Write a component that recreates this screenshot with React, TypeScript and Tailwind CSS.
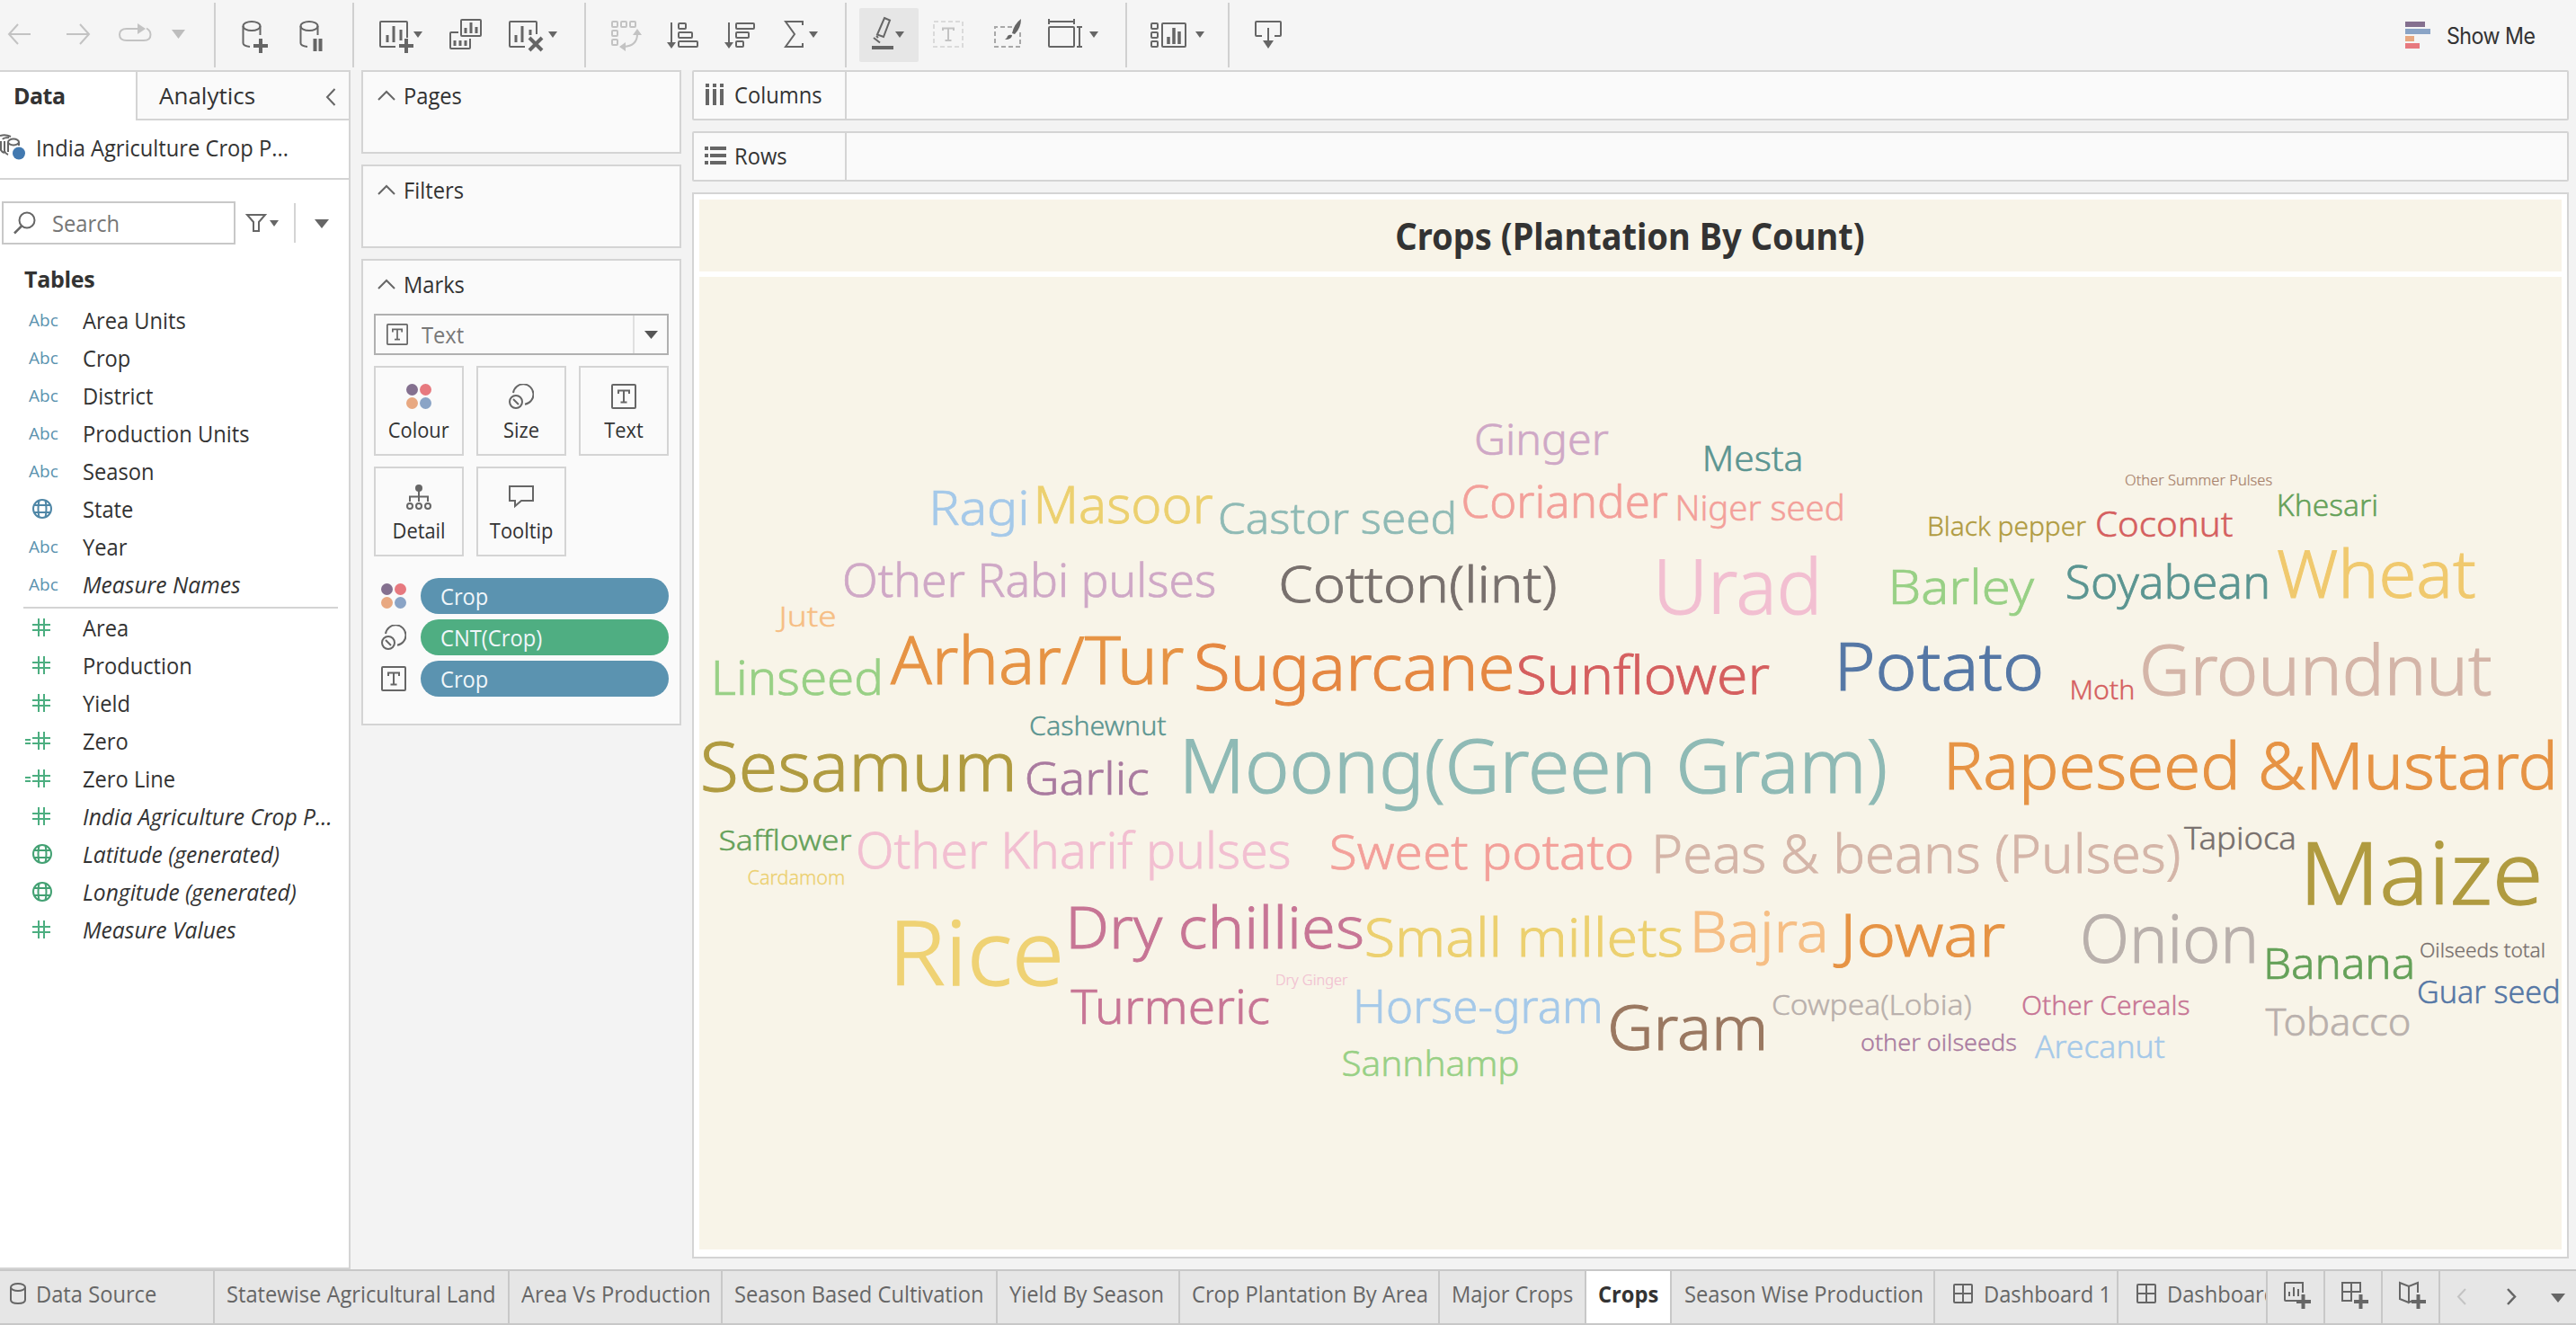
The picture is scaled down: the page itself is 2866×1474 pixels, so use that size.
import React from "react";

/* ---------- word cloud ---------- */

type Word = [text: string, left: number, right: number, baseline: number, cap: number, color: string];

const WORDS: Word[] = [
  ["Ginger", 1642, 1790, 506, 34, "#cfa8c6"],
  ["Mesta", 1897, 2004, 523.7, 27, "#5b9591"],
  ["Other Summer Pulses", 2365, 2527.5, 539.7, 11.5, "#a8826c"],
  ["Khesari", 2536, 2644.5, 574, 23, "#65a159"],
  ["Ragi", 1038.5, 1142, 584, 38, "#a5c9e9"],
  ["Masoor", 1154.6, 1349, 582.3, 41, "#ecd06f"],
  ["Castor seed", 1357, 1617.6, 594, 34, "#8fbab5"],
  ["Coriander", 1628.5, 1856, 576, 36, "#f3a09a"],
  ["Niger seed", 1866.5, 2050, 578.7, 27, "#f3a09a"],
  ["Black pepper", 2146, 2321.5, 595.7, 21, "#b09b40"],
  ["Coconut", 2333, 2484, 596.7, 28, "#d55f5f"],
  ["Other Rabi pulses", 940, 1351, 664, 37, "#cfa8c6"],
  ["Cotton(lint)", 1425.6, 1731, 670, 40, "#78706d"],
  ["Urad", 1846, 2021, 683, 60, "#f2bfd1"],
  ["Barley", 2106, 2264, 671.7, 38, "#98d085"],
  ["Soyabean", 2299.6, 2522.5, 666, 36.5, "#5b9591"],
  ["Wheat", 2534, 2753, 665, 52, "#f0c96e"],
  ["Jute", 863, 929, 697, 22.5, "#f6be84"],
  ["Linseed", 796, 979, 772.7, 38, "#98d085"],
  ["Arhar/Tur", 991, 1316.6, 761, 52, "#e69344"],
  ["Sugarcane", 1331, 1682, 768, 51, "#e58741"],
  ["Sunflower", 1690, 1969, 772, 41.5, "#d55f5f"],
  ["Potato", 2048, 2270, 768, 52, "#5577a5"],
  ["Moth", 2304.5, 2373.7, 778, 21, "#d55f5f"],
  ["Groundnut", 2384, 2771.5, 773, 55, "#d4b5a8"],
  ["Cashewnut", 1146, 1298, 817.7, 20.5, "#5b9591"],
  ["Sesamum", 783, 1126, 880, 54, "#b09b40"],
  ["Garlic", 1143, 1278, 883.7, 35.5, "#a97a9f"],
  ["Moong(Green Gram)", 1320, 2097, 881.7, 59, "#8fbab5"],
  ["Rapeseed &Mustard", 2169, 2840.6, 878, 51.7, "#e69344"],
  ["Safflower", 800.6, 947, 945.7, 22.5, "#65a159"],
  ["Other Kharif pulses", 955, 1435, 966, 39, "#f2bfd1"],
  ["Sweet potato", 1481, 1815.7, 967, 38, "#f3a09a"],
  ["Peas & beans (Pulses)", 1842, 2424, 970.7, 42, "#d4b5a8"],
  ["Tapioca", 2430, 2552, 945, 25, "#78706d"],
  ["Cardamom", 832.5, 939.6, 984, 15, "#ecd06f"],
  ["Maize", 2567.7, 2823.7, 1006, 69, "#b09b40"],
  ["Rice", 998, 1179, 1096, 71, "#efd274"],
  ["Dry chillies", 1191.6, 1515.6, 1055, 46, "#c77595"],
  ["Small millets", 1521, 1870.7, 1063.7, 41.5, "#ecd06f"],
  ["Bajra", 1886, 2030, 1059, 44.5, "#f6be84"],
  ["Jowar", 2040, 2231, 1063.7, 47.5, "#e69344"],
  ["Onion", 2318, 2507.7, 1071, 52, "#b9b0ac"],
  ["Banana", 2522, 2684, 1089, 34.7, "#65a159"],
  ["Oilseeds total", 2693, 2831, 1065, 15, "#78706d"],
  ["Dry Ginger", 1420, 1500, 1095.7, 11.5, "#f2bfd1"],
  ["Guar seed", 2691, 2846, 1116, 24.5, "#5577a5"],
  ["Turmeric", 1191.6, 1411.6, 1138.7, 38, "#c77595"],
  ["Horse-gram", 1510, 1780.5, 1137.7, 37, "#a5c9e9"],
  ["Gram", 1792.4, 1961.7, 1167.7, 49, "#9a7861"],
  ["Cowpea(Lobia)", 1972, 2193, 1128.7, 22.5, "#b9b0ac"],
  ["Other Cereals", 2250, 2436, 1128.5, 20.5, "#c77595"],
  ["Tobacco", 2520.4, 2680, 1152, 30.7, "#b9b0ac"],
  ["other oilseeds", 2071, 2243, 1168.7, 18, "#a97a9f"],
  ["Arecanut", 2264, 2408, 1176.7, 24.7, "#a5c9e9"],
  ["Sannhamp", 1494.5, 1689, 1197, 28, "#98d085"],
];

const ctx = document.createElement("canvas").getContext("2d")!;

function CloudWord({ word }: { word: Word }) {
  const [text, left, right, baseline, cap, color] = word;
  const size = cap / 0.714;
  ctx.font = `300 ${size}px "Noto Sans"`;
  const m = ctx.measureText(text);
  const k = (right - left) / (m.actualBoundingBoxRight + m.actualBoundingBoxLeft);
  return (
    <text
      transform={`translate(${left + m.actualBoundingBoxLeft * k} ${baseline}) scale(${k} 1)`}
      fontSize={size}
      fill={color}
      stroke={color}
      strokeWidth={size * 0.014}
    >
      {text}
    </text>
  );
}

/* ---------- shared pieces ---------- */

const G = "#666666";
const L = "#c3c3c3";

/* Icon cell whose drawing is expressed in toolbar coordinates */
function Cell({ x, w, h = 78, y = 0, children }: { x: number; w: number; h?: number; y?: number; children?: React.ReactNode }) {
  return (
    <svg className="block shrink-0" width={w} height={h} viewBox={`${x} ${y} ${w} ${h}`} fill="none" stroke={G} strokeWidth={2}>
      {children}
    </svg>
  );
}

/* Slightly condensed label */
const T = ({ children }: { children: string }) => (
  <span className="inline-block origin-left scale-x-[0.948] whitespace-nowrap">{children}</span>
);

const Caret = ({ x, y, w = 10, h = 7, c = G }: { x: number; y: number; w?: number; h?: number; c?: string }) => (
  <path d={`M${x} ${y}h${w}l${-w / 2} ${h}z`} fill={c} stroke="none" />
);

const Sep = () => <div className="h-[72px] w-0.5 shrink-0 bg-[#d0d0d0]" />;

function TextIcon({ s = 28 }: { s?: number }) {
  return (
    <svg width={s} height={s} viewBox="0 0 28 28" fill="none" stroke={G} strokeWidth={2}>
      <rect x="1" y="1" width="26" height="26" rx="1" />
      <path d="M8 11V7.5H20V11M14 7.5V20.5M10.5 20.5H17.5" />
    </svg>
  );
}

const ColourIcon = () => (
  <svg width="28" height="28" viewBox="0 0 28 28">
    <circle cx="6.5" cy="6.5" r="6.5" fill="#84708f" />
    <circle cx="21.5" cy="6.5" r="6.5" fill="#e7797f" />
    <circle cx="6.5" cy="21.5" r="6.5" fill="#e8a881" />
    <circle cx="21.5" cy="21.5" r="6.5" fill="#8aa4c6" />
  </svg>
);

const SizeIcon = () => (
  <svg width="28" height="28" viewBox="0 0 28 28" fill="none" stroke={G} strokeWidth={2}>
    <path d="M5 10A11.3 11.3 0 1 1 18 22.8" />
    <circle cx="8" cy="20" r="7" />
    <path d="M5 17l6 6" />
  </svg>
);

const DetailIcon = () => (
  <svg width="28" height="28" viewBox="0 0 28 28" fill="none" stroke={G} strokeWidth={2}>
    <circle cx="14" cy="4" r="4" fill={G} stroke="none" />
    <path d="M14 7v12M4 19v-5.500H24V19" />
    <circle cx="4" cy="24" r="3" />
    <circle cx="14" cy="24" r="3" />
    <circle cx="24" cy="24" r="3" />
  </svg>
);

const TooltipIcon = () => (
  <svg width="28" height="28" viewBox="0 0 28 28" fill="none" stroke={G} strokeWidth={2}>
    <path d="M1 2H27V18H14L7 24V18H1Z" />
  </svg>
);

const Globe = ({ c }: { c: string }) => (
  <svg width="22" height="22" viewBox="0 0 22 22" fill="none" stroke={c} strokeWidth={2}>
    <circle cx="11" cy="11" r="10" />
    <path d="M7.500 1.500Q5.500 11 7.500 20.500M14.500 1.500Q16.500 11 14.500 20.500M1.500 7H20.500M1.500 15H20.500" />
  </svg>
);

const Hash = ({ eq }: { eq?: boolean }) => (
  <svg width="28" height="20" viewBox="0 0 28 20" fill="none" stroke="#4cae80" strokeWidth={2}>
    {eq && <path d="M0 9H6M0 13H6" />}
    <path d="M8 7H28M8 13H28M15 0V20M21 0V20" />
  </svg>
);

/* ---------- toolbar ---------- */

const Cylinder = ({ x }: { x: number }) => (
  <>
    <ellipse cx={x + 10} cy="29" rx="9.500" ry="5" />
    <path d={`M${x + 0.500} 29V48Q${x + 0.500} 51 ${x + 8} 52M${x + 19.500} 29V39`} />
  </>
);

function Toolbar() {
  return (
    <header className="flex h-[78px] shrink-0 items-start bg-[#f5f5f5] pt-[3px]">
      <Cell x={0} w={238} y={3} h={72}>
        <path d="M34 38H10M20 27L10 38L20 49" stroke={L} />
        <path d="M74 38H99M89 27L99 38L89 49" stroke={L} />
        <path d="M153 32H141Q133 32 133 38.500T141 45H160Q167.500 45 167.500 38.500Q167.500 34 163 31.500" stroke={L} />
        <path d="M153 26L162 32L153 38z" fill={L} stroke="none" />
        <Caret x={191} y={33} w={15} h={10} c="#bdbdbd" />
      </Cell>
      <Sep />
      <Cell x={240} w={152} y={3} h={72}>
        <Cylinder x={270} />
        <path d="M290 43V59M282 51H298" strokeWidth={4} />
        <Cylinder x={334} />
        <path d="M350.500 43V57M356.500 43V57" strokeWidth={4} />
      </Cell>
      <Sep />
      <Cell x={394} w={256} y={3} h={72}>
        <path d="M440 52H424Q423 52 423 51V25Q423 24 424 24H452Q453 24 453 25V42" />
        <path d="M431 39V47M438 29V47M446 33V45" strokeWidth={3} />
        <path d="M452 43V59M444 51H460" strokeWidth={4} />
        <Caret x={460} y={35} />
        <rect x="513" y="22" width="22" height="18" rx="1" />
        <path d="M510 36H502Q501 36 501 37V53Q501 54 502 54H522Q523 54 523 53V43" />
        <path d="M518 31V37M524 25V37M530 30V37M506 45V51M512 45V51M518 45V51" strokeWidth={3} />
        <path d="M584 52H568Q567 52 567 51V25Q567 24 568 24H596Q597 24 597 25V38" />
        <path d="M574 39V47M581 29V47M590 33V39" strokeWidth={3} />
        <path d="M589 42L603 56M603 42L589 56" strokeWidth={4} />
        <Caret x={610} y={35} />
      </Cell>
      <Sep />
      <Cell x={652} w={288} y={3} h={72}>
        <g stroke={L}>
          <rect x="681" y="24" width="6" height="6" rx="1" />
          <rect x="691" y="24" width="6" height="6" rx="1" />
          <rect x="701" y="24" width="6" height="6" rx="1" />
          <rect x="681" y="34" width="6" height="6" rx="1" />
          <rect x="681" y="44" width="6" height="6" rx="1" />
          <path d="M709 38Q709 51 694 52" />
          <path d="M704 39L709 32L714 39zM696 47L689 52L696 57z" fill={L} stroke="none" />
        </g>
        <path d="M747 25V50M811 25V50" />
        <path d="M742 47H752L747 54zM806 47H816L811 54z" fill={G} stroke="none" />
        <rect x="755" y="26" width="8" height="6" rx="1" />
        <rect x="755" y="36" width="15" height="6" rx="1" />
        <rect x="755" y="46" width="21" height="6" rx="1" />
        <rect x="819" y="26" width="20" height="6" rx="1" />
        <rect x="819" y="36" width="14" height="6" rx="1" />
        <rect x="819" y="46" width="8" height="6" rx="1" />
        <path d="M893 28V24H874L884 38L874 52H893V48" />
        <Caret x={900} y={35} />
      </Cell>
      <Sep />
      <Cell x={942} w={310} y={3} h={72}>
        <rect x="956" y="9" width="66" height="60" rx="2" fill="#e6e6e6" stroke="none" />
        <path d="M984 20L990 22.500L983 41L976 38.500ZM972 42L979 47.500M975 40L977 42" />
        <path d="M970 53H994" strokeWidth={4} />
        <Caret x={996} y={35} />
        <rect x="1039" y="24" width="32" height="28" stroke="#dadada" strokeDasharray="5 3" />
        <path d="M1049 34V31.500H1061V34M1055 31.500V45M1051.500 45H1058.500" stroke={L} />
        <path d="M1126 30H1107V52H1135V36" stroke="#a8a8a8" strokeDasharray="5 3" />
        <path d="M1136 21Q1128 27 1126 37L1129 38Q1136 31 1136 21zM1126 39Q1126 44 1118 44Q1121 42 1121 40Q1123 38 1126 39z" fill={G} stroke="none" />
        <rect x="1167" y="30" width="28" height="22" rx="1" />
        <path d="M1167 24H1195M1167 21V27M1195 21V27M1201 30V52M1198 30H1204M1198 52H1204" />
        <Caret x={1212} y={35} />
      </Cell>
      <Sep />
      <Cell x={1254} w={112} y={3} h={72}>
        <rect x="1281" y="26" width="7" height="6" rx="1" />
        <rect x="1281" y="36" width="7" height="6" rx="1" />
        <rect x="1281" y="46" width="7" height="6" rx="1" />
        <rect x="1293" y="26" width="26" height="26" rx="1" />
        <path d="M1300 41V49M1306 31V49M1312 35V49" strokeWidth={3.500} />
        <Caret x={1330} y={35} />
      </Cell>
      <Sep />
      <Cell x={1368} w={70} y={3} h={72}>
        <path d="M1404 40H1398Q1397 40 1397 39V25Q1397 24 1398 24H1424Q1425 24 1425 25V39Q1425 40 1424 40H1418M1411 31V47" />
        <path d="M1405 45H1417L1411 54z" fill={G} stroke="none" />
      </Cell>
      <div className="mr-[44px] ml-auto flex h-[72px] items-center gap-[18px]">
        <svg width="28" height="30" viewBox="0 0 28 30">
          <rect width="22" height="6" fill="#84708f" />
          <rect y="8" width="28" height="6" fill="#8aa4c6" />
          <rect y="16" width="10" height="6" fill="#e8a881" />
          <rect y="24" width="16" height="6" fill="#e7797f" />
        </svg>
        <span className="w-[100px] pt-[3px] font-[Inter] text-[25px] leading-none tracking-[-0.6px] whitespace-nowrap text-[#333]">
          <span className="inline-block origin-left scale-x-[0.93]">Show Me</span>
        </span>
      </div>
    </header>
  );
}

/* ---------- data pane ---------- */

type Field = [kind: "abc" | "geo" | "num" | "calc" | "geon", name: string, italic?: boolean];

const DIMENSIONS: Field[] = [
  ["abc", "Area Units"],
  ["abc", "Crop"],
  ["abc", "District"],
  ["abc", "Production Units"],
  ["abc", "Season"],
  ["geo", "State"],
  ["abc", "Year"],
  ["abc", "Measure Names", true],
];

const MEASURES: Field[] = [
  ["num", "Area"],
  ["num", "Production"],
  ["num", "Yield"],
  ["calc", "Zero"],
  ["calc", "Zero Line"],
  ["num", "India Agriculture Crop P...", true],
  ["geon", "Latitude (generated)", true],
  ["geon", "Longitude (generated)", true],
  ["num", "Measure Values", true],
];

function FieldRow({ field: [kind, name, italic] }: { field: Field }) {
  return (
    <li className="flex h-[42px] items-center">
      <span className="flex w-[92px] shrink-0 items-center pl-7">
        {kind === "abc" && <span className="pl-1 text-[19px] leading-none font-medium text-[#5b93af]">Abc</span>}
        {kind === "geo" && <span className="pl-2"><Globe c="#4e86a6" /></span>}
        {kind === "geon" && <span className="pl-2"><Globe c="#43a173" /></span>}
        {kind === "num" && <Hash />}
        {kind === "calc" && <Hash eq />}
      </span>
      {italic ? (
        <span className="inline-block origin-left scale-x-[0.985] whitespace-nowrap italic">{name}</span>
      ) : (
        <T>{name}</T>
      )}
    </li>
  );
}

function DataPane() {
  return (
    <aside className="flex w-[390px] shrink-0 flex-col border-y-2 border-r-2 border-[#d4d4d4] bg-white">
      <div className="flex h-[54px]">
        <div className="w-[151px] pt-[6px] pl-[15px] text-[25px] leading-[40px] font-bold tracking-[-0.5px]">Data</div>
        <div className="flex flex-1 items-start justify-between border-b-2 border-l-2 border-[#d4d4d4] bg-[#fafafa] pt-[6px] pr-[14px] pl-6 text-[26px] leading-[40px]">
          Analytics
          <svg className="mt-[12px]" width="12" height="20" viewBox="0 0 12 20" fill="none" stroke={G} strokeWidth={2}>
            <path d="M10.500 1L2 10L10.500 19" />
          </svg>
        </div>
      </div>
      <div className="flex h-[66px] items-center border-b-2 border-[#d4d4d4] pb-1">
        <svg className="shrink-0" width="40" height="30" viewBox="0 0 40 30" fill="none" stroke={G} strokeWidth={2}>
          <path d="M0 2Q6 0 12 3M1 8V18Q2 20 5 21M5 8V19Q6 22 9 23M3 6Q4 4 10 4" />
          <ellipse cx="15" cy="9" rx="6" ry="3.500" />
          <path d="M9 9V20M21 9V13" />
          <circle cx="21" cy="21.500" r="7" fill="#4279b0" stroke="none" />
        </svg>
        <T>India Agriculture Crop P...</T>
      </div>
      <div className="mt-6 flex h-12 items-center">
        <div className="ml-0.5 flex h-12 w-[260px] items-center border-2 border-[#c8c8c8] pl-[10px]">
          <svg width="26" height="26" viewBox="0 0 26 26" fill="none" stroke={G} strokeWidth={2}>
            <circle cx="16" cy="10" r="8.500" />
            <path d="M10 16.500L2 24.500" strokeWidth={2.500} />
          </svg>
          <span className="ml-[18px] text-[#767676]"><T>Search</T></span>
        </div>
        <Cell x={262} w={65} y={224} h={48}>
          <path d="M275 239H295L288 247V257H282V247Z" />
          <Caret x={300} y={245} />
        </Cell>
        <div className="h-[44px] w-0.5 bg-[#d4d4d4]" />
        <Cell x={329} w={59} y={224} h={48}>
          <Caret x={350} y={244} w={16} h={10} />
        </Cell>
      </div>
      <h2 className="mt-[18px] h-[45px] pl-[27px] leading-[40px] font-bold tracking-[-0.3px]">Tables</h2>
      <ul>{DIMENSIONS.map((f) => <FieldRow key={f[1]} field={f} />)}</ul>
      <div className="mt-1 mr-3 ml-[26px] h-0.5 shrink-0 bg-[#d4d4d4]" />
      <ul>{MEASURES.map((f) => <FieldRow key={f[1]} field={f} />)}</ul>
    </aside>
  );
}

/* ---------- cards ---------- */

function CardTitle({ children }: { children: string }) {
  return (
    <div className="flex h-[52px] items-center gap-[9px] pl-4">
      <svg width="20" height="12" viewBox="0 0 20 12" fill="none" stroke={G} strokeWidth={2}>
        <path d="M1 11L10 2L19 11" />
      </svg>
      <T>{children}</T>
    </div>
  );
}

function MarkButton({ label, children }: { label: string; children: React.ReactNode }) {
  return (
    <div className="flex h-[100px] w-[100px] flex-col items-center border-2 border-[#d4d4d4] pt-[18px] text-[23px]">
      {children}
      <span className="mt-[9px] scale-x-[0.95] leading-[28px]">{label}</span>
    </div>
  );
}

function Pill({ icon, label, green }: { icon: React.ReactNode; label: string; green?: boolean }) {
  return (
    <div className="flex h-10 items-center gap-4 pl-2">
      {icon}
      <div className={(green ? "bg-[#4fae82]" : "bg-[#5b93b0]") + " flex h-10 flex-1 items-center rounded-full pl-[22px] text-[25px] text-[#f0f6fa]"}>
        <T>{label}</T>
      </div>
    </div>
  );
}

function Cards() {
  return (
    <section className="ml-3 flex w-[356px] shrink-0 flex-col gap-3">
      <div className="h-[93px] border-2 border-[#d4d4d4] bg-[#fafafa]"><CardTitle>Pages</CardTitle></div>
      <div className="h-[93px] border-2 border-[#d4d4d4] bg-[#fafafa]"><CardTitle>Filters</CardTitle></div>
      <div className="h-[519px] border-2 border-[#d4d4d4] bg-[#fafafa]">
        <CardTitle>Marks</CardTitle>
        <div className="mx-3 mt-[7px] flex h-[46px] items-center border-2 border-[#b0b0b0] pl-3">
          <TextIcon s={24} />
          <span className="ml-[15px] flex-1 text-[#787878]"><T>Text</T></span>
          <div className="flex h-full w-[38px] items-center justify-center border-l-2 border-[#e0e0e0]">
            <svg width="15" height="9" viewBox="0 0 15 9"><path d="M0 0H15L7.500 9z" fill="#555" /></svg>
          </div>
        </div>
        <div className="mx-3 mt-3 grid grid-cols-[100px_100px_100px] gap-x-[14px] gap-y-3">
          <MarkButton label="Colour"><ColourIcon /></MarkButton>
          <MarkButton label="Size"><SizeIcon /></MarkButton>
          <MarkButton label="Text"><TextIcon /></MarkButton>
          <MarkButton label="Detail"><DetailIcon /></MarkButton>
          <MarkButton label="Tooltip"><TooltipIcon /></MarkButton>
        </div>
        <div className="mx-3 mt-6 flex flex-col gap-1.5">
          <Pill icon={<ColourIcon />} label="Crop" />
          <Pill icon={<SizeIcon />} label="CNT(Crop)" green />
          <Pill icon={<TextIcon />} label="Crop" />
        </div>
      </div>
    </section>
  );
}

/* ---------- worksheet ---------- */

function Shelf({ label, icon }: { label: string; icon: React.ReactNode }) {
  return (
    <div className="flex h-14 items-stretch rounded-[2px] border-2 border-[#d4d4d4] bg-[#fafafa]">
      <div className="flex w-[170px] items-center gap-[9px] border-r-2 border-[#d4d4d4] pb-0.5 pl-3">
        {icon}
        <T>{label}</T>
      </div>
    </div>
  );
}

function Worksheet() {
  return (
    <main className="mr-2 ml-3 flex w-[2088px] flex-col gap-3">
      <Shelf
        label="Columns"
        icon={
          <svg width="24" height="24" viewBox="0 0 24 24" stroke={G} strokeWidth={4}>
            <path d="M3 0V4M11 0V4M19 0V4M3 6V24M11 6V24M19 6V24" />
          </svg>
        }
      />
      <Shelf
        label="Rows"
        icon={
          <svg width="24" height="20" viewBox="0 0 24 20" stroke={G} strokeWidth={4}>
            <path d="M0 2H4M6 2H24M0 10H4M6 10H24M0 18H4M6 18H24" />
          </svg>
        }
      />
      <div className="flex h-[1186px] flex-col gap-1.5 border-2 border-[#d4d4d4] bg-white px-1.5 pt-1.5">
        <h1 className="flex h-20 items-center justify-center bg-[#f8f4e8] font-['Noto_Sans'] text-[41px] leading-none font-bold text-[#333]">
          <span className="origin-center scale-x-[0.928]">Crops (Plantation By Count)</span>
        </h1>
        <svg className="block h-[1082px] w-[2072px] bg-[#f8f4e8] font-['Noto_Sans'] font-light" viewBox="778 308 2072 1082">
          {WORDS.map((w) => <CloudWord key={w[0]} word={w} />)}
        </svg>
      </div>
    </main>
  );
}

/* ---------- sheet tabs ---------- */

const WindowIcon = () => (
  <svg className="shrink-0" width="22" height="22" viewBox="0 0 22 22" fill="none" stroke={G} strokeWidth={2}>
    <rect x="1" y="1" width="20" height="20" rx="1" />
    <path d="M11 1V21M1 11H21" />
  </svg>
);

function Tab({ w, children, active }: { w: string; children: React.ReactNode; active?: boolean }) {
  return (
    <div
      className={
        w +
        " flex h-[58px] shrink-0 items-center overflow-hidden border-r-2 border-[#c8c8c8] pb-2 whitespace-nowrap" +
        (active ? " bg-white font-bold text-[#333]" : "")
      }
    >
      {children}
    </div>
  );
}

function SheetTabs() {
  return (
    <footer className="flex h-[62px] shrink-0 border-y-2 border-[#c8c8c8] bg-[#e6e6e6] text-[#666]">
      <Tab w="w-[239px]">
        <svg className="mr-[11px] ml-[11px]" width="18" height="24" viewBox="0 0 18 24" fill="none" stroke={G} strokeWidth={2}>
          <ellipse cx="9" cy="5" rx="8" ry="4" />
          <path d="M1 5V19Q1 23 9 23T17 19V5" />
        </svg>
        <T>Data Source</T>
      </Tab>
      <Tab w="w-[328px] pl-[13px]"><T>Statewise Agricultural Land</T></Tab>
      <Tab w="w-[237px] pl-[13px]"><T>Area Vs Production</T></Tab>
      <Tab w="w-[306px] pl-[13px]"><T>Season Based Cultivation</T></Tab>
      <Tab w="w-[203px] pl-[13px]"><T>Yield By Season</T></Tab>
      <Tab w="w-[289px] pl-[13px]"><T>Crop Plantation By Area</T></Tab>
      <Tab w="w-[163px] pl-[13px]"><T>Major Crops</T></Tab>
      <Tab w="w-[95px] pl-[13px]" active><T>Crops</T></Tab>
      <Tab w="w-[293px] pl-[14px]"><T>Season Wise Production</T></Tab>
      <Tab w="w-[204px] pl-5 gap-[12px]"><WindowIcon /><T>Dashboard 1</T></Tab>
      <Tab w="w-[166px] pl-5 gap-[12px]"><WindowIcon /><T>Dashboard</T></Tab>
      <div className="flex h-[58px]">
        <Cell x={2523} w={62} y={1414} h={58}>
          <path d="M2557 1447H2543Q2542 1447 2542 1446V1428Q2542 1427 2543 1427H2562V1438M2547 1437V1442M2552 1432V1442M2557 1434V1442" />
          <path d="M2562.500 1440V1456M2555 1448H2571" strokeWidth={4} />
        </Cell>
        <div className="h-[58px] w-0.5 bg-[#c8c8c8]" />
        <Cell x={2587} w={62} y={1414} h={58}>
          <path d="M2617 1447H2606V1427H2626V1438M2616 1427V1447M2606 1437H2626" />
          <path d="M2626.500 1440V1456M2619 1448H2635" strokeWidth={4} />
        </Cell>
        <div className="h-[58px] w-0.5 bg-[#c8c8c8]" />
        <Cell x={2651} w={62} y={1414} h={58}>
          <path d="M2680 1449L2670 1445V1427L2680 1431L2690 1427V1438M2680 1431V1449L2684 1447" />
          <path d="M2690.500 1440V1456M2683 1448H2699" strokeWidth={4} />
        </Cell>
        <div className="h-[58px] w-0.5 bg-[#c8c8c8]" />
        <Cell x={2715} w={151} y={1414} h={58}>
          <path d="M2743 1434L2735 1442.500L2743 1451" stroke="#c3c3c3" />
          <path d="M2790 1434L2798 1442.500L2790 1451" strokeWidth={2.500} />
          <Caret x={2838} y={1439} w={16} h={10} />
        </Cell>
      </div>
    </footer>
  );
}

export default function App() {
  return (
    <div className="flex h-[1474px] w-[2866px] flex-col overflow-hidden bg-[#f3f3f3] font-['Open_Sans',sans-serif] text-[25px] leading-none text-[#333]">
      <Toolbar />
      <div className="flex h-[1334px] shrink-0">
        <DataPane />
        <Cards />
        <Worksheet />
      </div>
      <SheetTabs />
    </div>
  );
}
